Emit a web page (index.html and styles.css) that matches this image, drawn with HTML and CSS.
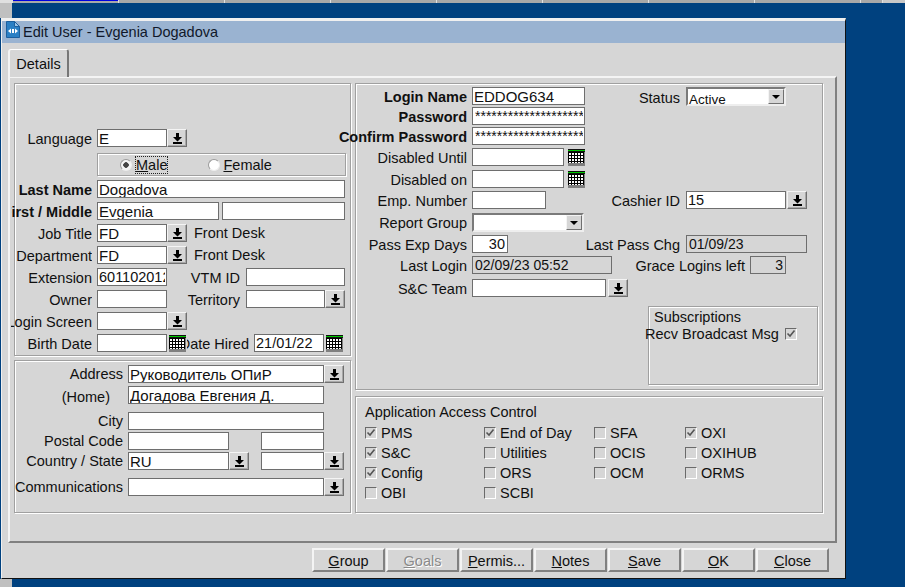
FILE: index.html

```html
<!DOCTYPE html>
<html lang="en">
<head>
    <meta charset="UTF-8">
    <title>Edit User - Evgenia Dogadova</title>
    <link rel="stylesheet" href="styles.css">
</head>
<body>
    <svg class="defs" width="0" height="0">
        <symbol id="i-lov" viewBox="0 0 9 11">
            <path d="M3 0h3v4h3L4.5 8.5 0 4h3z" fill="#000"/>
            <rect x="0" y="9" width="9" height="2" fill="#000"/>
        </symbol>
        <symbol id="i-cal" viewBox="0 0 19 18">
            <rect width="19" height="18" fill="#d6d6d6"/>
            <rect x="1" y="4" width="17" height="14" fill="#808080"/>
            <rect x="1" y="1" width="17" height="1" fill="#111"/>
            <rect x="1" y="2" width="17" height="1" fill="#00c800"/>
            <rect x="1" y="3" width="17" height="1" fill="#111"/>
            <rect x="1" y="4" width="15" height="11" fill="#fff"/>
            <path d="M1 4h15M1 7h15M1 10h15M1 13h15" stroke="#000" stroke-width="1" transform="translate(0 .5)"/>
            <path d="M1 4v11M4 4v11M7 4v11M10 4v11M13 4v11M16 4v11" stroke="#000" stroke-width="1" transform="translate(.5 0)"/>
        </symbol>
        <symbol id="i-check" viewBox="0 0 10 10">
            <path d="M1.500 4.500 4 7l4.500-5.500" fill="none" stroke="#555" stroke-width="1.600"/>
        </symbol>
    </svg>

    <div class="top-strip">
        <span class="seg seg-active"></span>
        <span class="seg"></span>
        <span class="seg"></span>
        <span class="seg"></span>
        <span class="seg"></span>
        <span class="seg"></span>
        <span class="seg"></span>
        <span class="seg"></span>
        <span class="seg seg-short"></span>
        <span class="seg seg-rest"></span>
    </div>
    <div class="desk">
        <div class="rail"></div>
        <div class="rail rail-bottom"></div>
    </div>

    <div class="window">
        <div class="title-bar">
            <svg class="title-icon" width="14" height="17" viewBox="0 0 14 17">
                <path d="M.5.5h8l5 5v11H.5z" fill="#2a7fc4" stroke="#1c5f9e"/>
                <path d="M8.500.5v5h5z" fill="#9cc6e8" stroke="#1c5f9e"/>
                <path d="M2 10l3-2.500v5zM12 10L9 7.500v5z" fill="#fff"/>
                <rect x="6" y="8" width="2" height="4" fill="#fff"/>
            </svg>
            Edit User - Evgenia Dogadova
        </div>

        <div class="tabs"><div class="tab">Details</div></div>

        <div class="panel">
            <div class="col col-left">
                <section class="group group-person">
                    <div class="row">
                        <label class="lbl lbl-p clip">Language</label>
                        <input class="inp w70" value="E">
                        <button class="lov"><svg width="9" height="11"><use href="#i-lov"/></svg></button>
                    </div>
                    <div class="gender">
                        <span class="radio radio-on"></span>
                        <span class="radio-text focus"><u>M</u>ale</span>
                        <span class="radio radio-2"></span>
                        <span class="radio-text"><u>F</u>emale</span>
                    </div>
                    <div class="row">
                        <label class="lbl lbl-p clip bold">Last Name</label>
                        <input class="inp w248" value="Dogadova">
                    </div>
                    <div class="row">
                        <label class="lbl lbl-p clip bold">First / Middle</label>
                        <input class="inp w122" value="Evgenia">
                        <input class="inp w123 ml3">
                    </div>
                    <div class="row">
                        <label class="lbl lbl-p clip">Job Title</label>
                        <input class="inp w70" value="FD">
                        <button class="lov"><svg width="9" height="11"><use href="#i-lov"/></svg></button>
                        <span class="desc">Front Desk</span>
                    </div>
                    <div class="row">
                        <label class="lbl lbl-p clip">Department</label>
                        <input class="inp w70" value="FD">
                        <button class="lov"><svg width="9" height="11"><use href="#i-lov"/></svg></button>
                        <span class="desc">Front Desk</span>
                    </div>
                    <div class="row">
                        <label class="lbl lbl-p clip">Extension</label>
                        <input class="inp w70 plain" value="601102012">
                        <label class="lbl lbl-side">VTM ID</label>
                        <input class="inp w99">
                    </div>
                    <div class="row">
                        <label class="lbl lbl-p clip">Owner</label>
                        <input class="inp w70">
                        <label class="lbl lbl-side">Territory</label>
                        <input class="inp w79">
                        <button class="lov"><svg width="9" height="11"><use href="#i-lov"/></svg></button>
                    </div>
                    <div class="row">
                        <label class="lbl lbl-p clip">Login Screen</label>
                        <input class="inp w70">
                        <button class="lov"><svg width="9" height="11"><use href="#i-lov"/></svg></button>
                    </div>
                    <div class="row">
                        <label class="lbl lbl-p clip">Birth Date</label>
                        <input class="inp w70">
                        <svg class="cal" width="19" height="18"><use href="#i-cal"/></svg>
                        <label class="lbl lbl-hired clip">Date Hired</label>
                        <input class="inp w70 plain" value="21/01/22">
                        <svg class="cal" width="19" height="18"><use href="#i-cal"/></svg>
                    </div>
                </section>

                <section class="group group-address">
                    <div class="row">
                        <label class="lbl lbl-a">Address</label>
                        <input class="inp w196" value="Руководитель ОПиР">
                        <button class="lov"><svg width="9" height="11"><use href="#i-lov"/></svg></button>
                    </div>
                    <div class="row mt3">
                        <label class="lbl lbl-home">(Home)</label>
                        <input class="inp w196" value="Догадова Евгения Д.">
                    </div>
                    <div class="row mt8">
                        <label class="lbl lbl-a">City</label>
                        <input class="inp w196">
                    </div>
                    <div class="row mt2">
                        <label class="lbl lbl-a">Postal Code</label>
                        <input class="inp w101">
                        <input class="inp w63 ml32">
                    </div>
                    <div class="row mt2">
                        <label class="lbl lbl-a">Country / State</label>
                        <input class="inp w101" value="RU">
                        <button class="lov"><svg width="9" height="11"><use href="#i-lov"/></svg></button>
                        <input class="inp w63 ml12">
                        <button class="lov"><svg width="9" height="11"><use href="#i-lov"/></svg></button>
                    </div>
                    <div class="row mt8">
                        <label class="lbl lbl-a">Communications</label>
                        <input class="inp w196">
                        <button class="lov"><svg width="9" height="11"><use href="#i-lov"/></svg></button>
                    </div>
                </section>
            </div>

            <div class="col col-right">
                <section class="group group-login">
                    <div class="row">
                        <label class="lbl lbl-r bold">Login Name</label>
                        <input class="inp w113" value="EDDOG634">
                        <label class="lbl lbl-status">Status</label>
                        <div class="combo w100">Active<span class="combo-btn"></span></div>
                    </div>
                    <div class="row mt2">
                        <label class="lbl lbl-r bold">Password</label>
                        <input class="inp w113 secret" value="**************************">
                    </div>
                    <div class="row mt2">
                        <label class="lbl lbl-r bold">Confirm Password</label>
                        <input class="inp w113 secret" value="**************************">
                    </div>
                    <div class="row mt3">
                        <label class="lbl lbl-r">Disabled Until</label>
                        <input class="inp w92">
                        <svg class="cal ml3" width="19" height="18"><use href="#i-cal"/></svg>
                    </div>
                    <div class="row mt4">
                        <label class="lbl lbl-r">Disabled on</label>
                        <input class="inp w92">
                        <svg class="cal ml3" width="19" height="18"><use href="#i-cal"/></svg>
                    </div>
                    <div class="row mt3">
                        <label class="lbl lbl-r">Emp. Number</label>
                        <input class="inp w74">
                        <label class="lbl lbl-cashier">Cashier ID</label>
                        <input class="inp w100 plain" value="15">
                        <button class="lov ml1"><svg width="9" height="11"><use href="#i-lov"/></svg></button>
                    </div>
                    <div class="row mt4">
                        <label class="lbl lbl-r">Report Group</label>
                        <div class="combo w112"><span class="combo-btn"></span></div>
                    </div>
                    <div class="row mt4">
                        <label class="lbl lbl-r">Pass Exp Days</label>
                        <input class="inp w36 num plain" value="30">
                        <label class="lbl lbl-pass">Last Pass Chg</label>
                        <input class="inp w121 off" value="01/09/23">
                    </div>
                    <div class="row mt3">
                        <label class="lbl lbl-r">Last Login</label>
                        <input class="inp w140 off" value="02/09/23 05:52">
                        <label class="lbl lbl-grace">Grace Logins left</label>
                        <input class="inp w36 num off" value="3">
                    </div>
                    <div class="row mt5">
                        <label class="lbl lbl-r">S&amp;C Team</label>
                        <input class="inp w134">
                        <button class="lov ml2"><svg width="9" height="11"><use href="#i-lov"/></svg></button>
                    </div>
                    <div class="group subs">
                        <div class="subs-title">Subscriptions</div>
                        <div class="subs-row">
                            <span>Recv Broadcast Msg</span>
                            <span class="chk"><svg width="10" height="10"><use href="#i-check"/></svg></span>
                        </div>
                    </div>
                </section>

                <section class="group group-access">
                    <div class="access-title">Application Access Control</div>
                    <div class="access-grid">
                        <div class="opt"><span class="chk"><svg width="10" height="10"><use href="#i-check"/></svg></span>PMS</div>
                        <div class="opt"><span class="chk"><svg width="10" height="10"><use href="#i-check"/></svg></span>End of Day</div>
                        <div class="opt"><span class="chk"></span>SFA</div>
                        <div class="opt"><span class="chk"><svg width="10" height="10"><use href="#i-check"/></svg></span>OXI</div>
                        <div class="opt"><span class="chk"><svg width="10" height="10"><use href="#i-check"/></svg></span>S&amp;C</div>
                        <div class="opt"><span class="chk"></span>Utilities</div>
                        <div class="opt"><span class="chk"></span>OCIS</div>
                        <div class="opt"><span class="chk"></span>OXIHUB</div>
                        <div class="opt"><span class="chk"><svg width="10" height="10"><use href="#i-check"/></svg></span>Config</div>
                        <div class="opt"><span class="chk"></span>ORS</div>
                        <div class="opt"><span class="chk"></span>OCM</div>
                        <div class="opt"><span class="chk"></span>ORMS</div>
                        <div class="opt"><span class="chk"></span>OBI</div>
                        <div class="opt"><span class="chk"></span>SCBI</div>
                    </div>
                </section>
            </div>
        </div>

        <div class="footer">
            <button class="btn"><u>G</u>roup</button>
            <button class="btn btn-off"><u>G</u>oals</button>
            <button class="btn"><u>P</u>ermis...</button>
            <button class="btn"><u>N</u>otes</button>
            <button class="btn"><u>S</u>ave</button>
            <button class="btn"><u>O</u>K</button>
            <button class="btn"><u>C</u>lose</button>
        </div>
    </div>
</body>
</html>
```

FILE: styles.css

```css
* {
    box-sizing: border-box;
}
html, body {
    margin: 0;
    height: 100%;
}
body {
    font-family: "Liberation Sans", Arial, sans-serif;
    font-size: 14.5px;
    color: #101010;
    background: #00417f;
    overflow: hidden;
    position: relative;
}
.defs {
    position: absolute;
}

/* desktop behind the window */
.top-strip {
    display: flex;
    height: 3px;
    padding-left: 13px;
    gap: 1px;
    background: #e0e0e0;
}
.seg {
    width: 105px;
    background: #a8a8a8;
}
.seg-active {
    background: linear-gradient(#0000e0 1px, #a8a8a8 1px);
}
.seg-short {
    width: 21px;
}
.seg-rest {
    width: auto;
    flex: 1;
    background: #c8c8c8;
}
.desk {
    height: 584px;
    display: flex;
    flex-direction: column;
    justify-content: space-between;
}
.rail {
    width: 12px;
    height: 15px;
    background: #c0c0c0;
}
.rail-bottom {
    height: 8px;
}

/* window */
.window {
    position: absolute;
    left: 1px;
    top: 18px;
    width: 845px;
    height: 561px;
    background: #d6d6d6;
    border-top: 3px solid #f0f0f0;
    border-left: 1px solid #f0f0f0;
    border-right: 1px solid #111;
    border-bottom: 1px solid #111;
}
.title-bar {
    height: 22px;
    display: flex;
    align-items: center;
    gap: 3px;
    padding-left: 4px;
    background: #9ab3d1;
    color: #10182a;
}
.title-icon {
    margin-top: -5px;
    flex: none;
}
.tabs {
    padding: 6px 0 0 6px;
    height: 33px;
}
.tab {
    position: relative;
    z-index: 1;
    width: 61px;
    height: 28px;
    padding-top: 6px;
    text-align: center;
    background: #d6d6d6;
    border-top: 1px solid #fff;
    border-left: 2px solid #f4f4f4;
    border-right: 2px solid #777;
    border-radius: 3px 3px 0 0;
}
.panel {
    display: flex;
    gap: 4px;
    width: 829px;
    height: 467px;
    margin: 0 0 0 6px;
    padding: 5px 4px;
    border: 2px solid #808080;
    border-top-color: #f4f4f4;
    border-left-color: #f4f4f4;
}
.col {
    display: flex;
    flex-direction: column;
}
.col-left {
    width: 337px;
    gap: 4px;
}
.col-right {
    width: 468px;
    gap: 6px;
}
.group {
    border: 1px solid #a0a0a0;
    box-shadow: inset 1px 1px 0 #fff, 1px 1px 0 #fff;
}
.group-person {
    height: 273px;
    padding-top: 45px;
    display: flex;
    flex-direction: column;
    gap: 4px;
}
.group-address {
    height: 153px;
    padding-top: 4px;
}
.group-login {
    height: 307px;
    padding-top: 3px;
}
.group-access {
    height: 117px;
    padding: 6px 0 0 9px;
}

/* form rows */
.row {
    display: flex;
    height: 18px;
    align-items: flex-start;
}
.mt2 { margin-top: 2px; }
.mt3 { margin-top: 3px; }
.mt4 { margin-top: 4px; }
.mt5 { margin-top: 5px; }
.mt8 { margin-top: 8px; }

.lbl {
    flex: none;
    display: flex;
    justify-content: flex-end;
    height: 19px;
    line-height: 19px;
    margin-right: 5px;
    white-space: nowrap;
}
.group-person .lbl, .group-login .lbl {
    height: 20px;
    padding-top: 1px;
}
.group-login .lbl-status {
    height: 21px;
    padding-top: 2px;
}
.clip {
    overflow: hidden;
}
.bold {
    font-weight: bold;
}
.lbl-p { width: 81px; margin-left: -4px; }
.lbl-side { width: 73px; margin-right: 6px; }
.lbl-hired { width: 62px; }
.lbl-a { width: 108px; }
.lbl-home { width: 95px; margin-right: 18px; padding-top: 2px; height: 21px; }
.lbl-r { width: 111px; }
.lbl-status { width: 95px; margin-right: 6px; }
.lbl-cashier { width: 134px; margin-right: 6px; }
.lbl-pass { width: 172px; margin-right: 6px; }
.lbl-grace { width: 133px; }

.inp {
    flex: none;
    height: 18px;
    padding: 0 1px;
    font-family: inherit;
    font-size: 15px;
    color: #101010;
    background: #fff;
    border: 1px solid #6e6e6e;
    border-radius: 0;
    outline: none;
}
.w36 { width: 36px; }
.w63 { width: 63px; }
.w70 { width: 70px; }
.w74 { width: 74px; }
.w79 { width: 79px; }
.w92 { width: 92px; }
.w99 { width: 99px; }
.w100 { width: 100px; }
.w101 { width: 101px; }
.w112 { width: 112px; }
.w113 { width: 113px; }
.w121 { width: 121px; }
.w122 { width: 122px; }
.w123 { width: 123px; }
.w134 { width: 134px; }
.w140 { width: 140px; }
.w196 { width: 196px; }
.w248 { width: 248px; }
.num {
    text-align: right;
    padding-right: 2px;
}
.plain {
    font-size: 14.5px;
}
.off {
    background: #d6d6d6;
    font-size: 14px;
    padding-left: 2px;
}
.secret {
    font-size: 14px;
    padding-left: 2px;
}
.desc {
    margin-left: 7px;
    line-height: 19px;
}
.lov {
    flex: none;
    width: 20px;
    height: 18px;
    padding: 0;
    display: flex;
    align-items: center;
    justify-content: center;
    background: #d6d6d6;
    border: 1px solid;
    border-color: #f4f4f4 #707070 #707070 #f4f4f4;
    box-shadow: inset -1px -1px 0 #a8a8a8;
}
.cal {
    flex: none;
    margin-left: 1px;
}
.combo {
    position: relative;
    flex: none;
    height: 19px;
    padding: 3px 0 0 1px;
    font-size: 13.5px;
    line-height: 15px;
    background: #fff;
    border: 2px solid;
    border-color: #7a7a7a #eee #eee #7a7a7a;
}
.combo-btn {
    position: absolute;
    right: 0;
    top: 0;
    width: 16px;
    height: 15px;
    background: #d6d6d6;
    border: 1px solid;
    border-color: #f4f4f4 #707070 #707070 #f4f4f4;
}
.combo-btn::after {
    content: "";
    position: absolute;
    left: 3px;
    top: 5px;
    border: 4px solid transparent;
    border-top: 4px solid #000;
    border-bottom: 0;
}

/* gender radios */
.gender {
    display: flex;
    align-items: center;
    width: 249px;
    height: 23px;
    margin: 2px 0 0 82px;
    padding-left: 22px;
    border: 1px solid #a0a0a0;
    box-shadow: inset 1px 1px 0 #fff, 1px 1px 0 #fff;
}
.radio {
    flex: none;
    width: 12px;
    height: 12px;
    border-radius: 50%;
    background: #fff;
    border: 1px solid #9a9a9a;
    border-bottom-color: #eee;
    border-right-color: #eee;
}
.radio-on {
    background: radial-gradient(circle, #444 0 2.500px, #f4f4f4 3px);
}
.radio-2 {
    margin-left: 40px;
}
.radio-text {
    margin-left: 4px;
    line-height: 18px;
}
.radio-2 + .radio-text {
    margin-left: 3px;
}
.focus {
    outline: 1px dotted #222;
    outline-offset: -1px;
    padding: 0 1px;
    margin-left: 3px;
}

/* checkboxes */
.chk {
    flex: none;
    display: inline-flex;
    align-items: center;
    justify-content: center;
    width: 12px;
    height: 12px;
    background: #d6d6d6;
    border: 1px solid;
    border-color: #6a6a6a #fff #fff #6a6a6a;
}
.subs {
    width: 170px;
    height: 79px;
    margin: 9px 0 0 292px;
}
.subs-title {
    padding-left: 5px;
    height: 18px;
    line-height: 18px;
    margin-top: 1px;
}
.subs-row {
    display: flex;
    align-items: center;
    gap: 6px;
    height: 18px;
    margin: -1px 0 0 -4px;
    white-space: nowrap;
}
.access-title {
    height: 18px;
    line-height: 18px;
}
.access-grid {
    display: grid;
    grid-template-columns: 119px 110px 91px auto;
    grid-auto-rows: 20px;
    margin-top: 2px;
}
.opt {
    display: flex;
    align-items: center;
    gap: 4px;
}

/* bottom buttons */
.footer {
    display: flex;
    justify-content: flex-end;
    gap: 1px;
    margin-top: 5px;
    padding-right: 16px;
}
.btn {
    width: 73px;
    height: 24px;
    padding: 2px 0 0;
    font-family: inherit;
    font-size: 14.5px;
    color: #101010;
    background: #d6d6d6;
    border: 2px solid;
    border-color: #f4f4f4 #808080 #808080 #f4f4f4;
}
.btn-off {
    color: #8a8a8a;
    text-shadow: 1px 1px 0 #fff;
}
.ml1 { margin-left: 1px; }
.ml2 { margin-left: 2px; }
.ml3 { margin-left: 3px; }
.ml12 { margin-left: 12px; }
.ml32 { margin-left: 32px; }
```
